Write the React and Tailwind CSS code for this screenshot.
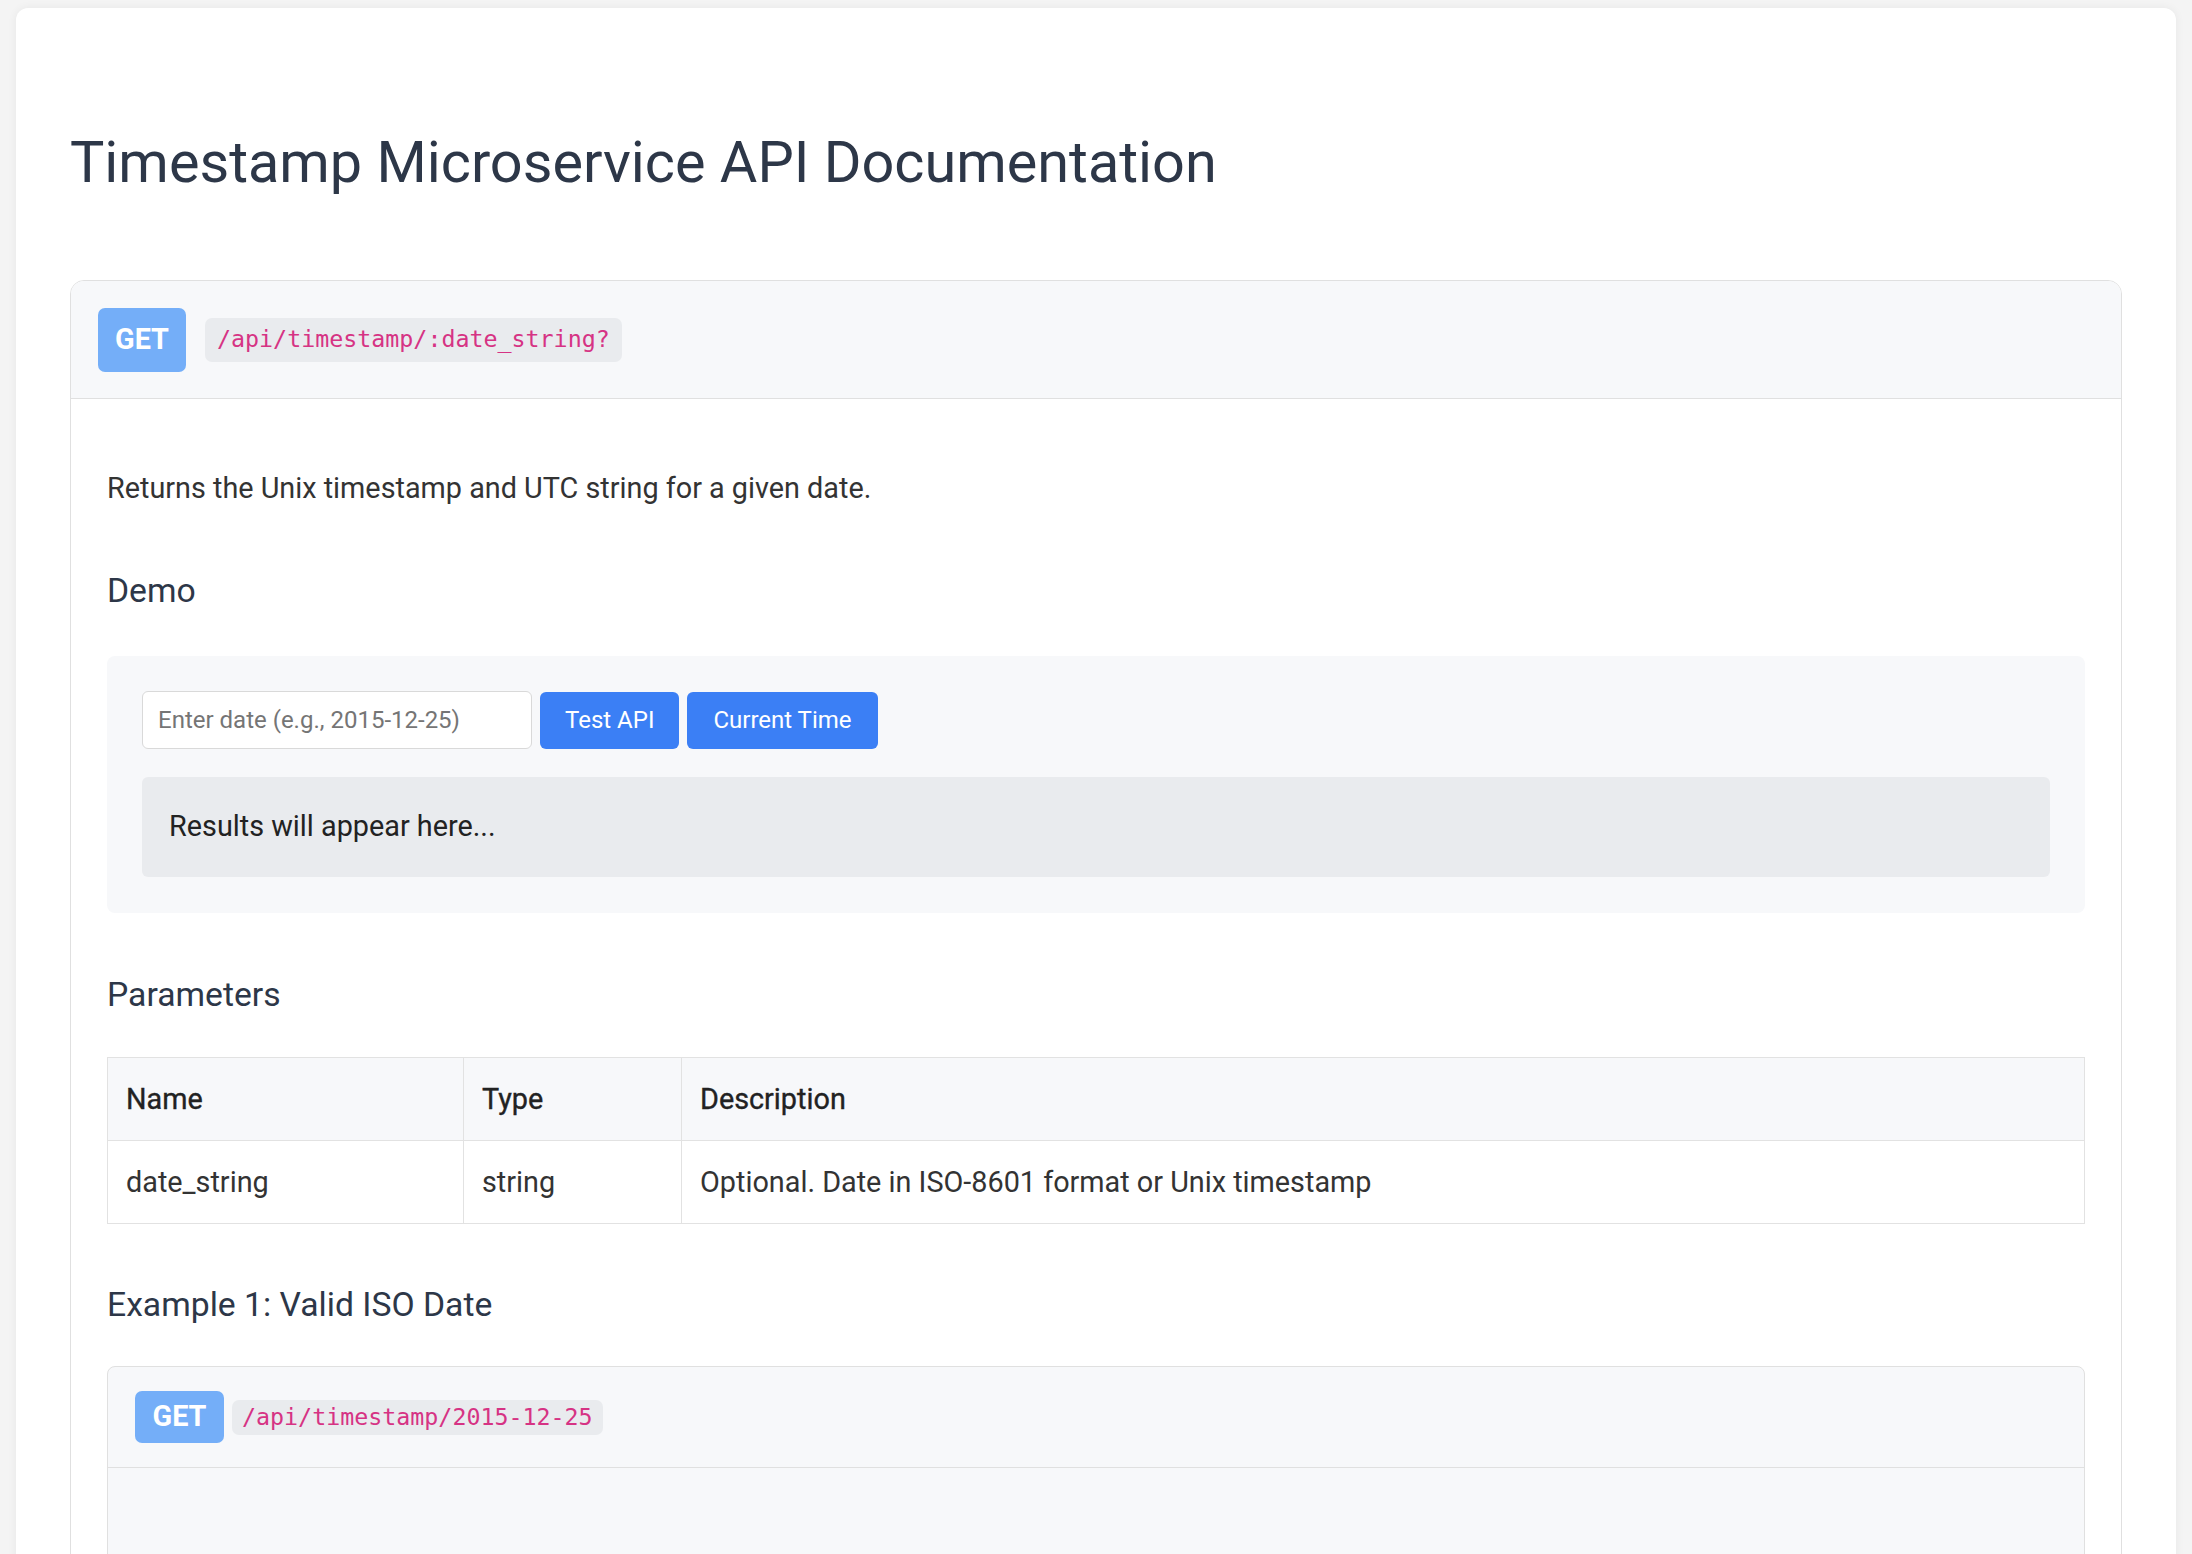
import React from 'react';

const Badge = ({ className }) => (
  <span className={"flex items-center justify-center bg-[#74aef8] text-white font-bold text-[28.8px] rounded-[7px] " + className}>
    GET
  </span>
);

const Path = ({ children, className }) => (
  <code
    className={"flex items-center bg-[#e9ebee] text-[#d63384] rounded-[7px] text-[23.3px] " + className}
    style={{ fontFamily: '"DejaVu Sans Mono", "Liberation Mono", monospace' }}
  >
    {children}
  </code>
);

const params = [
  { name: 'date_string', type: 'string', desc: 'Optional. Date in ISO-8601 format or Unix timestamp' },
];

export default function App() {
  const [value, setValue] = React.useState('');

  return (
    <div
      className="min-h-screen bg-[#f4f4f4] px-4 pt-2"
      style={{ fontFamily: 'Roboto, "Liberation Sans", sans-serif' }}
    >
      <div className="bg-white rounded-[12px] shadow-[0_0_10px_rgba(0,0,0,0.06)] px-[54px] pt-[122px] pb-[120px]">
        <h1 className="text-[57.6px] leading-[66px] font-normal text-[#2d3748] m-0">
          Timestamp Microservice API Documentation
        </h1>

        {/* Endpoint */}
        <div className="mt-[84px] border border-[#e0e0e0] rounded-[14px] overflow-hidden">
          <div className="flex items-center gap-[19px] bg-[#f7f8fa] h-[118px] pl-[27px] border-b border-[#e0e0e0]">
            <Badge className="w-[88px] h-[64px]" />
            <Path className="h-[44px] px-[12px]">/api/timestamp/:date_string?</Path>
          </div>

          <div className="px-[36px] pt-[68px] pb-[80px]">
            <p className="text-[28.8px] leading-[42px] text-[#333]">
              Returns the Unix timestamp and UTC string for a given date.
            </p>

            <h3 className="mt-[62px] text-[33.7px] leading-[40px] font-normal text-[#2d3748]">Demo</h3>
            <div className="mt-[45px] bg-[#f7f8fa] rounded-[8px] p-[35px] pb-[36px]">
              <div className="flex items-center gap-2">
                <input
                  type="text"
                  value={value}
                  onChange={(e) => setValue(e.target.value)}
                  placeholder="Enter date (e.g., 2015-12-25)"
                  className="w-[390px] h-[58px] px-[15px] bg-white border border-[#d9d9d9] rounded-[6px] text-[24px] text-[#333] placeholder:text-[#757575] outline-none"
                />
                <button className="h-[57px] px-[25px] bg-[#3b7ff5] text-white text-[24px] rounded-[6px]">
                  Test API
                </button>
                <button className="h-[57px] px-[26px] bg-[#3b7ff5] text-white text-[24px] rounded-[6px]">
                  Current Time
                </button>
              </div>
              <div className="mt-[28px] h-[100px] flex items-center px-[27px] bg-[#e9ebee] rounded-[6px] text-[28.8px] text-[#222]">
                Results will appear here...
              </div>
            </div>

            <h3 className="mt-[62px] text-[33.7px] leading-[40px] font-normal text-[#2d3748]">Parameters</h3>
            <table className="mt-[42px] w-full border-collapse text-[28.8px] text-[#333]">
              <thead>
                <tr className="bg-[#f7f8fa] [-webkit-text-stroke:0.35px_#222]">
                  <th className="w-[356px] border border-[#e2e2e2] px-[18px] py-[19px] leading-[44px] text-left font-normal text-[#222]">Name</th>
                  <th className="w-[218px] border border-[#e2e2e2] px-[18px] py-[19px] leading-[44px] text-left font-normal text-[#222]">Type</th>
                  <th className="border border-[#e2e2e2] px-[18px] py-[19px] leading-[44px] text-left font-normal text-[#222]">Description</th>
                </tr>
              </thead>
              <tbody>
                {params.map((p) => (
                  <tr key={p.name}>
                    <td className="border border-[#e2e2e2] px-[18px] py-[19px] leading-[44px]">{p.name}</td>
                    <td className="border border-[#e2e2e2] px-[18px] py-[19px] leading-[44px]">{p.type}</td>
                    <td className="border border-[#e2e2e2] px-[18px] py-[19px] leading-[44px]">{p.desc}</td>
                  </tr>
                ))}
              </tbody>
            </table>

            <h3 className="mt-[61px] text-[33.7px] leading-[40px] font-normal text-[#2d3748]">Example 1: Valid ISO Date</h3>
            <div className="mt-[41px] border border-[#e0e0e0] rounded-[8px] overflow-hidden bg-[#f7f8fa]">
              <div className="flex items-center gap-[8px] h-[101px] pl-[27px] border-b border-[#e0e0e0]">
                <Badge className="w-[89px] h-[52px]" />
                <Path className="h-[35px] px-[10px]">/api/timestamp/2015-12-25</Path>
              </div>
              <div className="h-[300px]" />
            </div>
          </div>
        </div>
      </div>
    </div>
  );
}
